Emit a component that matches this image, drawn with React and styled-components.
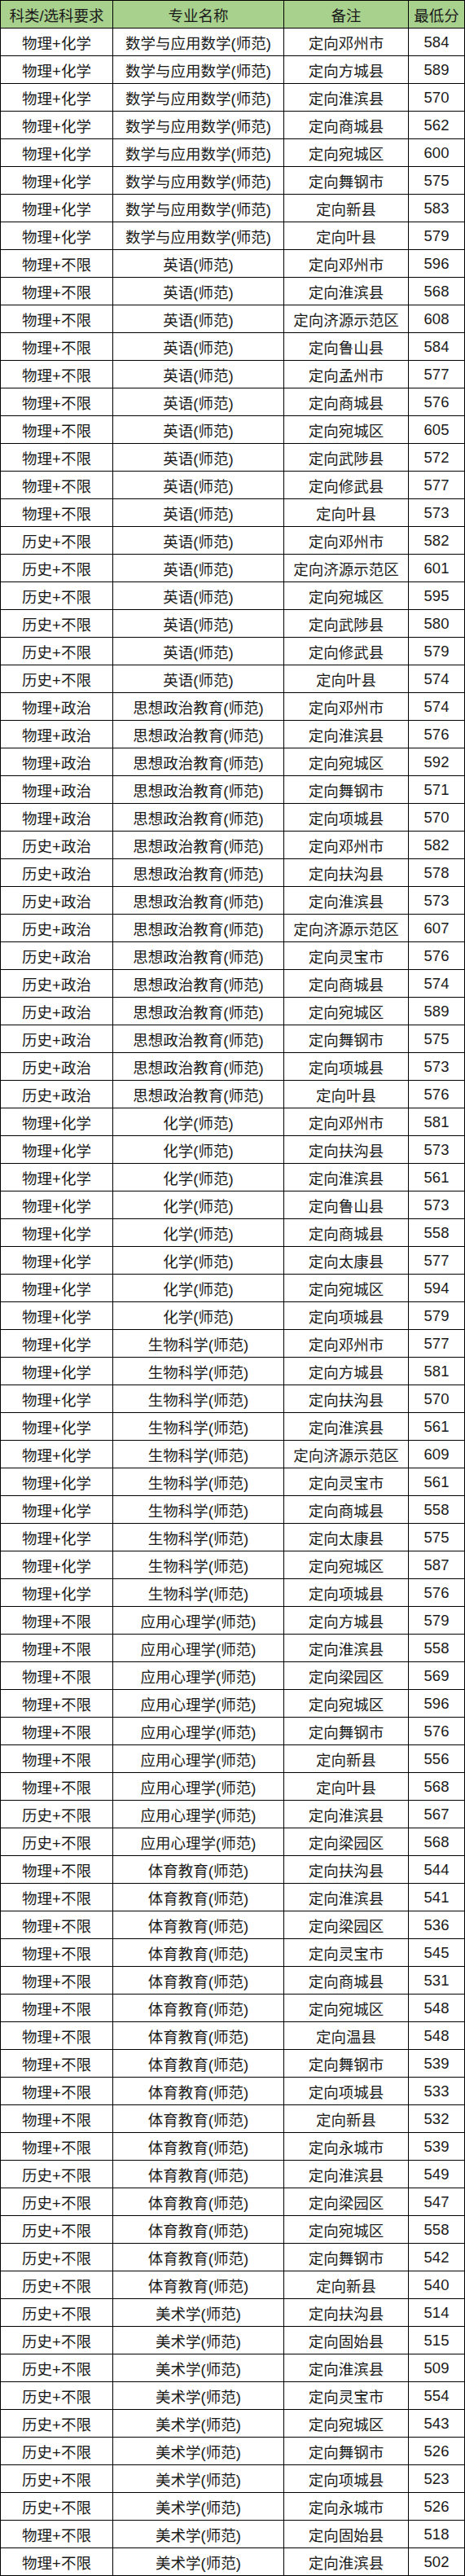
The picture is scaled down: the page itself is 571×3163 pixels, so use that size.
import React from "react";
import styled, { createGlobalStyle } from "styled-components";

const GlobalStyle = createGlobalStyle`
	html, body {
		margin: 0;
		padding: 0;
		background: #ffffff;
	}
`;

const rows = `
物理+化学|数学与应用数学(师范)|定向邓州市|584
物理+化学|数学与应用数学(师范)|定向方城县|589
物理+化学|数学与应用数学(师范)|定向淮滨县|570
物理+化学|数学与应用数学(师范)|定向商城县|562
物理+化学|数学与应用数学(师范)|定向宛城区|600
物理+化学|数学与应用数学(师范)|定向舞钢市|575
物理+化学|数学与应用数学(师范)|定向新县|583
物理+化学|数学与应用数学(师范)|定向叶县|579
物理+不限|英语(师范)|定向邓州市|596
物理+不限|英语(师范)|定向淮滨县|568
物理+不限|英语(师范)|定向济源示范区|608
物理+不限|英语(师范)|定向鲁山县|584
物理+不限|英语(师范)|定向孟州市|577
物理+不限|英语(师范)|定向商城县|576
物理+不限|英语(师范)|定向宛城区|605
物理+不限|英语(师范)|定向武陟县|572
物理+不限|英语(师范)|定向修武县|577
物理+不限|英语(师范)|定向叶县|573
历史+不限|英语(师范)|定向邓州市|582
历史+不限|英语(师范)|定向济源示范区|601
历史+不限|英语(师范)|定向宛城区|595
历史+不限|英语(师范)|定向武陟县|580
历史+不限|英语(师范)|定向修武县|579
历史+不限|英语(师范)|定向叶县|574
物理+政治|思想政治教育(师范)|定向邓州市|574
物理+政治|思想政治教育(师范)|定向淮滨县|576
物理+政治|思想政治教育(师范)|定向宛城区|592
物理+政治|思想政治教育(师范)|定向舞钢市|571
物理+政治|思想政治教育(师范)|定向项城县|570
历史+政治|思想政治教育(师范)|定向邓州市|582
历史+政治|思想政治教育(师范)|定向扶沟县|578
历史+政治|思想政治教育(师范)|定向淮滨县|573
历史+政治|思想政治教育(师范)|定向济源示范区|607
历史+政治|思想政治教育(师范)|定向灵宝市|576
历史+政治|思想政治教育(师范)|定向商城县|574
历史+政治|思想政治教育(师范)|定向宛城区|589
历史+政治|思想政治教育(师范)|定向舞钢市|575
历史+政治|思想政治教育(师范)|定向项城县|573
历史+政治|思想政治教育(师范)|定向叶县|576
物理+化学|化学(师范)|定向邓州市|581
物理+化学|化学(师范)|定向扶沟县|573
物理+化学|化学(师范)|定向淮滨县|561
物理+化学|化学(师范)|定向鲁山县|573
物理+化学|化学(师范)|定向商城县|558
物理+化学|化学(师范)|定向太康县|577
物理+化学|化学(师范)|定向宛城区|594
物理+化学|化学(师范)|定向项城县|579
物理+化学|生物科学(师范)|定向邓州市|577
物理+化学|生物科学(师范)|定向方城县|581
物理+化学|生物科学(师范)|定向扶沟县|570
物理+化学|生物科学(师范)|定向淮滨县|561
物理+化学|生物科学(师范)|定向济源示范区|609
物理+化学|生物科学(师范)|定向灵宝市|561
物理+化学|生物科学(师范)|定向商城县|558
物理+化学|生物科学(师范)|定向太康县|575
物理+化学|生物科学(师范)|定向宛城区|587
物理+化学|生物科学(师范)|定向项城县|576
物理+不限|应用心理学(师范)|定向方城县|579
物理+不限|应用心理学(师范)|定向淮滨县|558
物理+不限|应用心理学(师范)|定向梁园区|569
物理+不限|应用心理学(师范)|定向宛城区|596
物理+不限|应用心理学(师范)|定向舞钢市|576
物理+不限|应用心理学(师范)|定向新县|556
物理+不限|应用心理学(师范)|定向叶县|568
历史+不限|应用心理学(师范)|定向淮滨县|567
历史+不限|应用心理学(师范)|定向梁园区|568
物理+不限|体育教育(师范)|定向扶沟县|544
物理+不限|体育教育(师范)|定向淮滨县|541
物理+不限|体育教育(师范)|定向梁园区|536
物理+不限|体育教育(师范)|定向灵宝市|545
物理+不限|体育教育(师范)|定向商城县|531
物理+不限|体育教育(师范)|定向宛城区|548
物理+不限|体育教育(师范)|定向温县|548
物理+不限|体育教育(师范)|定向舞钢市|539
物理+不限|体育教育(师范)|定向项城县|533
物理+不限|体育教育(师范)|定向新县|532
物理+不限|体育教育(师范)|定向永城市|539
历史+不限|体育教育(师范)|定向淮滨县|549
历史+不限|体育教育(师范)|定向梁园区|547
历史+不限|体育教育(师范)|定向宛城区|558
历史+不限|体育教育(师范)|定向舞钢市|542
历史+不限|体育教育(师范)|定向新县|540
历史+不限|美术学(师范)|定向扶沟县|514
历史+不限|美术学(师范)|定向固始县|515
历史+不限|美术学(师范)|定向淮滨县|509
历史+不限|美术学(师范)|定向灵宝市|554
历史+不限|美术学(师范)|定向宛城区|543
历史+不限|美术学(师范)|定向舞钢市|526
历史+不限|美术学(师范)|定向项城县|523
历史+不限|美术学(师范)|定向永城市|526
物理+不限|美术学(师范)|定向固始县|518
物理+不限|美术学(师范)|定向淮滨县|502
`.trim().split("\n").map(line => line.split("|"));

const Table = styled.div`
	width: 571px;
	box-sizing: border-box;
	border-left: 1px solid #000;
	border-top: 1px solid #000;
	font-family: "Liberation Sans", "Noto Sans CJK SC", sans-serif;
	font-size: 18.5px;
	color: #1a1a1a;
`;

const Row = styled.div`
	display: grid;
	grid-template-columns: 138px 210px 153px 69px;
	background: ${props => props.head ? "#a9d18e" : "#ffffff"};
`;

const Cell = styled.div`
	box-sizing: border-box;
	height: 34px;
	border-right: 1px solid #000;
	border-bottom: 1px solid #000;
	display: flex;
	align-items: center;
	justify-content: center;
	white-space: nowrap;
	overflow: hidden;
	letter-spacing: 0;
`;

const headers = ["科类/选科要求", "专业名称", "备注", "最低分"];

export default function App() {
	return (
		<>
			<GlobalStyle />
			<Table>
				<Row head>
					{headers.map(h => <Cell key={h}>{h}</Cell>)}
				</Row>
				{rows.map((r, i) => (
					<Row key={i}>
						{r.map((c, j) => <Cell key={j}>{c}</Cell>)}
					</Row>
				))}
			</Table>
		</>
	);
}
